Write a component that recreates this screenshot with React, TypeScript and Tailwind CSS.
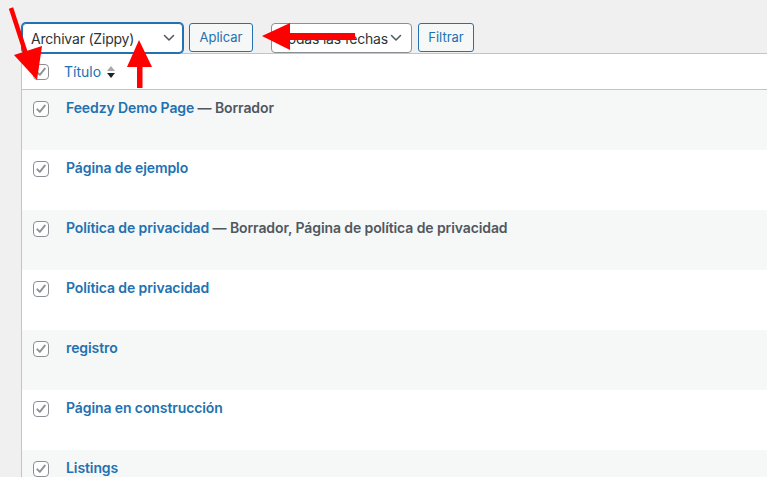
import React from "react";

const Check = () => (
  <span className="flex h-[16px] w-[16px] items-center justify-center rounded-[4px] border border-[#8c8f94] bg-white">
    <svg width="12" height="12" viewBox="0 0 12 12">
      <path d="M2.3 6.3 L4.8 8.8 L9.8 2.6" fill="none" stroke="#8c8f94" strokeWidth="1.9" strokeLinecap="round" strokeLinejoin="round" />
    </svg>
  </span>
);

const Chevron = () => (
  <svg width="12" height="8" viewBox="0 0 12 8">
    <path d="M1.5 1.5 L6 6 L10.5 1.5" fill="none" stroke="#50575e" strokeWidth="1.5" strokeLinecap="round" strokeLinejoin="round" />
  </svg>
);

const rows: { title: string; state?: string }[] = [
  { title: "Feedzy Demo Page", state: "Borrador" },
  { title: "Página de ejemplo" },
  { title: "Política de privacidad", state: "Borrador, Página de política de privacidad" },
  { title: "Política de privacidad" },
  { title: "registro" },
  { title: "Página en construcción" },
  { title: "Listings" },
];

export default function App() {
  return (
    <div className="relative h-[477px] w-[767px] overflow-hidden bg-[#f0f0f1] font-['Inter','Noto_Sans',sans-serif] text-[14px] text-[#2c3338]">
      <div className="flex h-[53px] items-start pl-[22px] pt-[23px]">
        <div className="flex h-[30px] w-[161px] items-center justify-between rounded-[4px] border border-[#2271b1] bg-white pl-[8px] pr-[7px] shadow-[0_0_0_1px_#2271b1]">
          <span className="text-[14px] tracking-[-0.2px] text-[#2c3338]">Archivar (Zippy)</span>
          <Chevron />
        </div>
        <div className="ml-[6px] flex h-[29px] w-[64px] items-center justify-center rounded-[3px] border border-[#2271b1] bg-[#f6f7f7] text-[13px] text-[#2271b1]">
          Aplicar
        </div>
        <div className="ml-[18px] flex h-[30px] w-[141px] items-center justify-between rounded-[4px] border border-[#8c8f94] bg-white pl-[8px] pr-[9px]">
          <span className="text-[14px] tracking-[-0.2px] text-[#2c3338]">Todas las fechas</span>
          <Chevron />
        </div>
        <div className="ml-[6px] flex h-[29px] w-[56px] items-center justify-center rounded-[3px] border border-[#2271b1] bg-[#f6f7f7] text-[13px] text-[#2271b1]">
          Filtrar
        </div>
      </div>
      <div className="ml-[21px] border-l border-t border-[#c3c4c7] bg-white">
        <div className="flex h-[36px] items-center border-b border-[#c3c4c7] pl-[11px]">
          <Check />
          <span className="ml-[15px] text-[14px] text-[#2271b1]">Título</span>
          <svg className="ml-[5px]" width="10" height="16" viewBox="0 0 10 16">
            <path d="M1 7 L5 2 L9 7 Z" fill="#a7aaad" />
            <path d="M1 9 L5 14 L9 9 Z" fill="#1d2327" />
          </svg>
        </div>
        {rows.map((r, i) => (
          <div key={i} className={`flex h-[60px] items-start pl-[11px] pt-[11px] ${i % 2 === 0 ? "bg-[#f6f7f7]" : "bg-white"}`}>
            <Check />
            <span className="ml-[17px] -mt-[3px] text-[14px] font-semibold leading-[20px] tracking-[-0.1px]">
              <span className="text-[#2271b1]">{r.title}</span>
              {r.state && <span className="text-[#50575e]"> — {r.state}</span>}
            </span>
          </div>
        ))}
      </div>
      <svg className="pointer-events-none absolute left-0 top-0" width="767" height="477" viewBox="0 0 767 477">
        <line x1="11" y1="8" x2="26" y2="54" stroke="#ff0000" strokeWidth="4.5" />
        <polygon points="14,55 42,46 37,80" fill="#ff0000" />
        <rect x="137" y="64" width="5.5" height="24" fill="#ff0000" />
        <polygon points="139,40 127,67 152,67" fill="#ff0000" />
        <rect x="288" y="33" width="67" height="7" fill="#ff0000" />
        <polygon points="262,36 290,23 290,50" fill="#ff0000" />
      </svg>
    </div>
  );
}
